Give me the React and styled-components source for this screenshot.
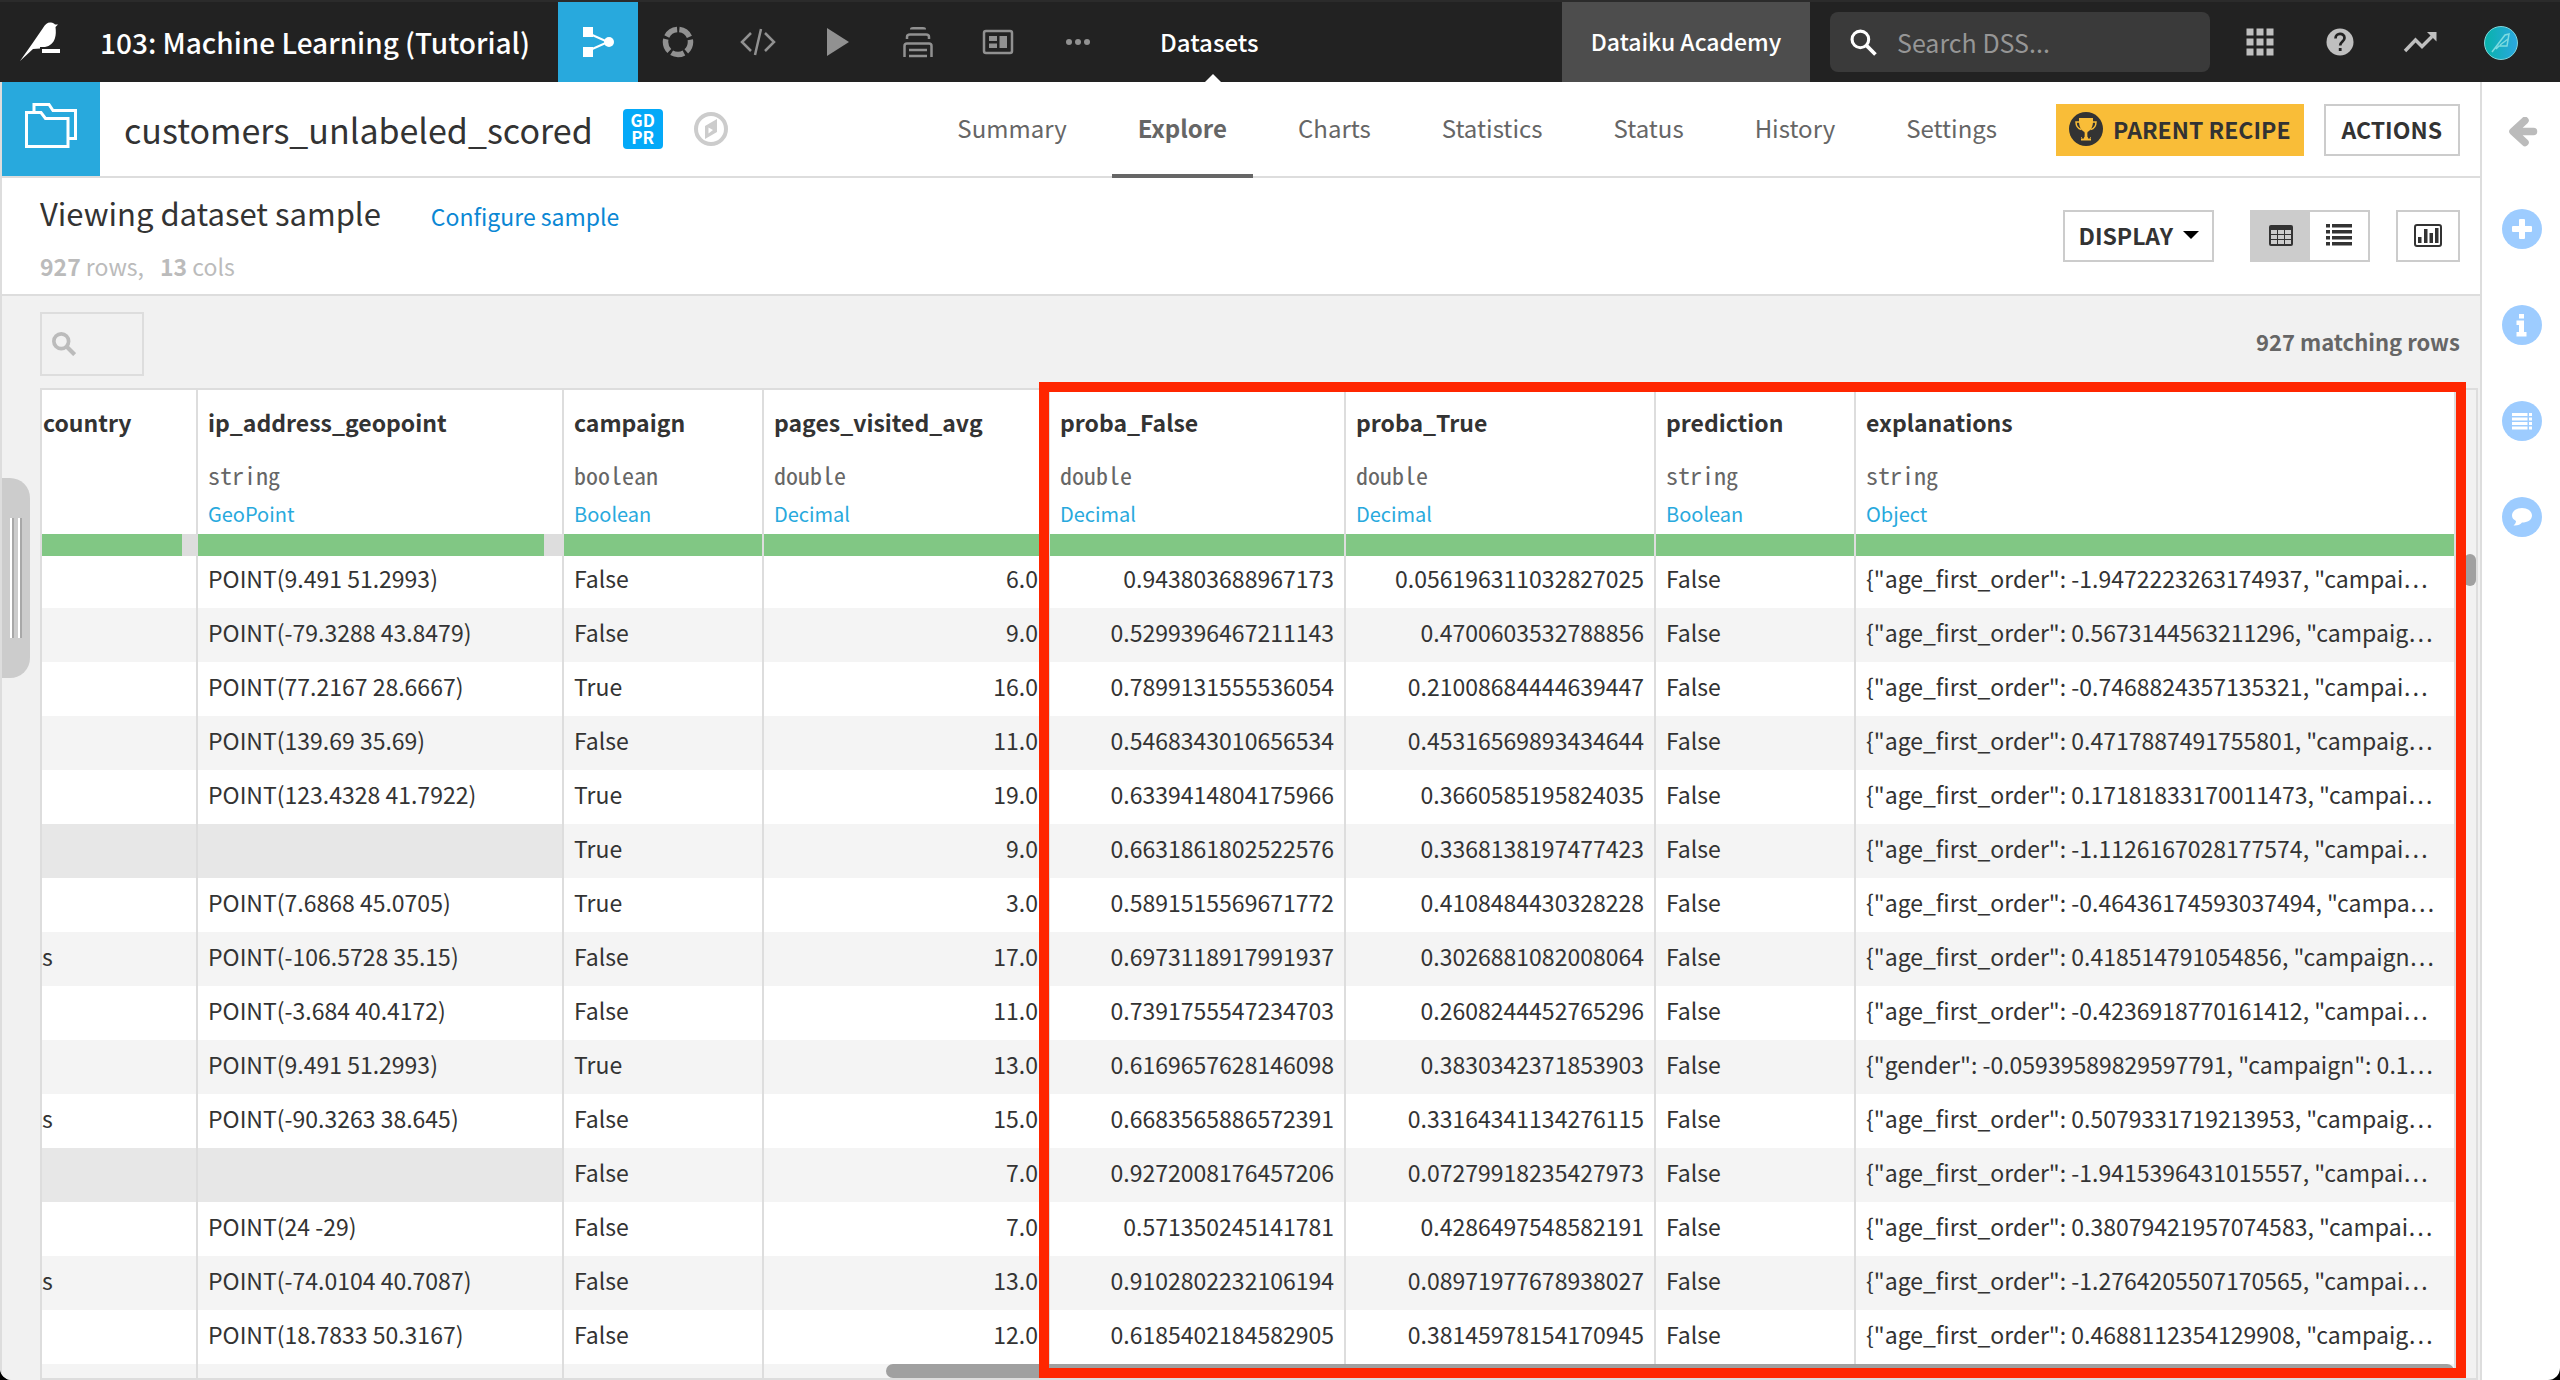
import React from 'react'
import styled, { createGlobalStyle } from 'styled-components'

const GlobalStyle = createGlobalStyle`
  * {
    box-sizing: border-box;
  }

  body {
    margin: 0;
    background: #000;
    color: #333;
    font-family: "Noto Sans CJK KR", "Noto Sans", sans-serif;
    font-size: 23px;
    line-height: 40px;
  }

  button, input {
    font: inherit;
    color: inherit;
    background: none;
    border: 0;
    padding: 0;
    margin: 0;
    border-radius: 0;
    outline: none;
  }

  button {
    cursor: pointer;
  }

  a {
    color: inherit;
    text-decoration: none;
  }

  svg {
    display: block;
    flex: none;
  }
`

const Window = styled.div`
  display: flex;
  flex-direction: column;
  height: 100vh;
  overflow: hidden;
  background: #fff;
  border-radius: 0 0 12px 12px;
`

// top bar

const TopBar = styled.header`
  display: flex;
  align-items: stretch;
  height: 82px;
  flex: none;
  padding-right: 42px;
  background: #222;
  border-top: 2px solid #2b2b2b;
  color: #fff;
`

const Project = styled.a`
  display: flex;
  align-items: center;
  width: 558px;
  padding-left: 20px;
  gap: 40px;
  font-size: 28px;
  font-weight: 500;
  white-space: nowrap;
`

const NavButton = styled.button`
  display: flex;
  align-items: center;
  justify-content: center;
  width: 80px;
  color: #919191;
  background: ${p => p.$active ? '#28a9dd' : 'transparent'};
`

const Section = styled.a`
  position: relative;
  display: flex;
  align-items: center;
  padding: 0 42px;
  font-size: 24px;
  font-weight: 500;

  &:after {
    content: '';
    position: absolute;
    bottom: 0;
    left: 50%;
    margin-left: -4px;
    border: 8px solid transparent;
    border-top: 0;
    border-bottom-color: #fff;
  }
`

const Instance = styled.a`
  display: flex;
  align-items: center;
  justify-content: center;
  width: 248px;
  margin-left: auto;
  padding-bottom: 2px;
  background: #4d4d4d;
  font-weight: 500;
`

const GlobalSearch = styled.label`
  display: flex;
  align-items: center;
  gap: 20px;
  width: 380px;
  height: 60px;
  margin: 10px 10px 0 20px;
  padding-left: 20px;
  border-radius: 8px;
  background: #3a3a3a;

  input {
    flex: 1;
    min-width: 0;
    font-size: 25px;
  }

  input::placeholder {
    color: #969696;
    opacity: 1;
  }
`

const TopIcon = styled.button`
  display: flex;
  align-items: center;
  justify-content: center;
  width: 80px;
  color: #bfbfbf;
`

const Avatar = styled.button`
  display: flex;
  align-items: center;
  justify-content: center;
  width: 34px;
  height: 34px;
  margin: 24px 0 0 24px;
  border-radius: 50%;
  border: 1px solid #7fd6dc;
  background: linear-gradient(90deg, #08b3ab, #2ba7e0);
  color: #7ddbe0;
`

// page

const Body = styled.div`
  display: flex;
  flex: 1;
  min-height: 0;
  border-left: 2px solid #ddd;
`

const Main = styled.main`
  display: flex;
  flex-direction: column;
  flex: 1;
  min-width: 0;
`

const TitleBar = styled.div`
  display: flex;
  align-items: center;
  height: 96px;
  flex: none;
  padding-right: 20px;
  border-bottom: 2px solid #ddd;
`

const TypeTile = styled.div`
  display: flex;
  justify-content: center;
  width: 98px;
  height: 94px;
  padding-top: 21px;
  background: #28a9dd;
`

const Title = styled.h1`
  margin: 0 30px 0 24px;
  padding-top: 2px;
  font-size: 34px;
  font-weight: 400;
  line-height: 48px;
`

const Badge = styled.span`
  width: 40px;
  height: 40px;
  margin-right: 30px;
  padding-top: 2px;
  border-radius: 4px;
  background: #04a9f8;
  color: #fff;
  font-size: 17px;
  font-weight: 700;
  line-height: 17px;
  text-align: center;
`

const Tabs = styled.nav`
  display: flex;
  align-self: stretch;
  gap: 19px;
  margin: 0 33px 0 auto;
`

const Tab = styled.a`
  height: 96px;
  padding: 26px 26px 0;
  color: #666;
  font-size: 24px;
  font-weight: ${p => p.$active ? 700 : 400};
  border-bottom: 4px solid ${p => p.$active ? '#666' : 'transparent'};
`

const Button = styled.button`
  display: flex;
  align-items: center;
  justify-content: center;
  gap: 10px;
  height: 52px;
  padding: 0 ${p => p.$pad || 16}px 2px;
  border: 2px solid ${p => p.$primary ? '#f9bd38' : '#ccc'};
  background: ${p => p.$primary ? '#f9bd38' : '#fff'};
  color: #333;
  font-weight: 700;
  white-space: nowrap;
`

const TitleActions = styled.div`
  display: flex;
  gap: 20px;
  padding-top: 2px;
`

const SampleBar = styled.section`
  display: flex;
  justify-content: space-between;
  align-items: flex-start;
  height: 118px;
  flex: none;
  padding: 10px 20px 0 38px;
  border-bottom: 2px solid #ddd;
`

const SampleTitle = styled.div`
  display: flex;
  align-items: baseline;
  gap: 50px;

  h2 {
    margin: 0;
    font-size: 31px;
    font-weight: 400;
    line-height: 50px;
  }

  a {
    color: #0a87d4;
  }
`

const Counts = styled.p`
  margin: 0;
  color: #bbb;
  line-height: 56px;

  span {
    margin-right: 16px;
  }
`

const SampleActions = styled.div`
  display: flex;
  padding-top: 22px;
`

const Toggle = styled.div`
  display: flex;
  width: 120px;
  height: 52px;
  margin: 0 26px 0 36px;
  border: 2px solid #ccc;
`

const ToggleButton = styled.button`
  display: flex;
  align-items: center;
  justify-content: center;
  flex: 1;
  padding-bottom: 2px;
  background: ${p => p.$active ? '#ccc' : '#fff'};
`

const Explorer = styled.section`
  position: relative;
  display: flex;
  flex-direction: column;
  flex: 1;
  min-height: 0;
  padding: 16px 2px 0 38px;
  background: #f1f1f1;
`

const FilterRow = styled.div`
  display: flex;
  justify-content: space-between;
  align-items: flex-start;
  height: 76px;
  flex: none;
  padding-right: 18px;
  color: #666;
  font-size: 22px;
  font-weight: 700;
  line-height: 58px;
`

const Filter = styled.label`
  display: flex;
  align-items: center;
  width: 104px;
  height: 64px;
  padding: 0 10px;
  gap: 8px;
  border: 2px solid #ddd;

  input {
    width: 40px;
  }
`

const Drawer = styled.button`
  position: absolute;
  left: 0;
  top: 182px;
  display: flex;
  align-items: center;
  justify-content: center;
  gap: 4px;
  width: 28px;
  height: 200px;
  border-radius: 0 20px 20px 0;
  background: #ccc;

  i {
    width: 4px;
    height: 120px;
    background: #fff;
    border-right: 2px solid #a8a8a8;
  }
`

// grid

const Grid = styled.div`
  position: relative;
  flex: 1;
  min-height: 0;
  border: 2px solid #ddd;
  padding-right: 20px;
`

const Clip = styled.div`
  height: 100%;
  overflow: hidden;
  border-right: 2px solid #ddd;
`

const Table = styled.table`
  width: 100%;
  table-layout: fixed;
  border-collapse: separate;
  border-spacing: 0;
  background: #fff;
`

const Head = styled.th`
  padding: 12px 0 0;
  border-left: ${p => p.$first ? 0 : '2px solid #ddd'};
  text-align: left;
  font-weight: 400;
  vertical-align: top;
  white-space: nowrap;

  div {
    height: 40px;
    padding-left: ${p => p.$first ? 1 : 10}px;
  }

  .name {
    margin-bottom: 10px;
    font-weight: 700;
  }

  .storage {
    height: 44px;
    line-height: 46px;
    color: #666;
    font-family: "Noto Sans Mono CJK KR", "Noto Sans Mono CJK SC", monospace;
    font-size: 24px;
  }

  .meaning {
    height: 38px;
    line-height: 36px;
    color: #28a9dd;
    font-size: 20px;
  }
`

const Quality = styled.span`
  display: block;
  height: 22px;
  background: #ddd;

  i {
    display: block;
    height: 100%;
    background: #81c784;
  }
`

const Row = styled.tr`
  background: ${p => p.$odd ? '#f4f4f4' : '#fff'};
`

const Cell = styled.td`
  height: ${p => p.$top ? 52 : 54}px;
  padding: 0 10px ${p => p.$top ? 8 : 6}px ${p => p.$first ? 0 : 10}px;
  border-left: ${p => p.$first ? 0 : '2px solid #ddd'};
  background: ${p => p.$empty ? '#e7e7e7' : 'transparent'};
  line-height: ${p => p.$top ? 44 : 48}px;
  text-align: ${p => p.$num ? 'right' : 'left'};
  white-space: nowrap;
  overflow: hidden;
`

const ScrollThumb = styled.div`
  position: absolute;
  background: #a0a0a0;
  border-radius: 8px;
  ${p => p.$vertical
    ? 'top: 164px; right: 0; width: 12px; height: 32px;'
    : 'bottom: 0; left: 844px; right: 22px; height: 14px;'}
`

const Highlight = styled.div`
  position: absolute;
  top: -8px;
  bottom: 0;
  left: 997px;
  right: 10px;
  border: 10px solid #ff2600;
  pointer-events: none;
`

const SideBar = styled.aside`
  display: flex;
  flex-direction: column;
  align-items: center;
  width: 80px;
  flex: none;
  padding: 31px 0 0 2px;
  gap: 56px;
  border-left: 2px solid #ddd;
`

const SideButton = styled.button`
  display: flex;
  align-items: center;
  justify-content: center;
  width: 40px;
  height: 40px;
  border-radius: 50%;
  color: #fff;
  background: ${p => p.$plain ? 'transparent' : '#9dccff'};
`

// icons

const Svg = ({ w, h, children, ...rest }) => (
  <svg width={w} height={h} viewBox={`0 0 ${w} ${h}`} fill='currentColor' aria-hidden='true' {...rest}>{children}</svg>
)

const BirdIcon = () => (
  <Svg w={40} h={40}>
    <path d='M0 39 L12 22 L23 6 C25 2 28 0 31 0.500 C33 0.500 34 1.500 35 2.500 L38 2.500 L35.500 5 C36 9 36 13 35 16 C33.500 21 30 24 25 25 L20 25 L20 26.500 L13 27 Z' />
    <path d='M22 27H40V31H22z' />
  </Svg>
)

const FlowIcon = () => (
  <Svg w={32} h={32} color='#fff'>
    <path d='M1 1H11V11H1zM1 21H11V31H1z' />
    <circle cx='27' cy='16' r='5' />
    <path d='M8 8L26 16L8 24' fill='none' stroke='currentColor' strokeWidth='2' />
  </Svg>
)

const RingIcon = () => (
  <Svg w={32} h={32}>
    <circle cx='16' cy='16' r='12.5' fill='none' stroke='currentColor' strokeWidth='5.5' strokeDasharray='12.9 2.808' strokeDashoffset='-1.4' transform='rotate(-90 16 16)' />
  </Svg>
)

const CodeIcon = () => (
  <Svg w={36} h={28}>
    <path d='M11 5L2 14L11 23M25 5L34 14L25 23M21 1L15 27' fill='none' stroke='currentColor' strokeWidth='2.500' />
  </Svg>
)

const PlayIcon = () => (
  <Svg w={24} h={30}>
    <path d='M1 1L23 15L1 29z' />
  </Svg>
)

const StackIcon = () => (
  <Svg w={32} h={32}>
    <path d='M8 3.500V3Q8 1 11 1H21Q24 1 24 3V3.500z' />
    <path d='M5 13V11Q5 8.500 8 8.500H24Q27 8.500 27 11V13M2.500 31V20Q2.500 17.500 5 17.500H27Q29.500 17.500 29.500 20V31M7 24H25M7 30H25' fill='none' stroke='currentColor' strokeWidth='2.500' />
  </Svg>
)

const PanelIcon = () => (
  <Svg w={32} h={26}>
    <rect x='2' y='2' width='28' height='22' rx='2' fill='none' stroke='currentColor' strokeWidth='2.500' />
    <path d='M7 7H15V12H7zM7 14.500H15V19H7zM17.500 7H25V19H17.500z' />
  </Svg>
)

const DotsIcon = () => (
  <Svg w={26} h={8}>
    <circle cx='4' cy='4' r='3' /><circle cx='13' cy='4' r='3' /><circle cx='22' cy='4' r='3' />
  </Svg>
)

const LensIcon = ({ size, stroke, color }) => (
  <svg width={size} height={size} viewBox='0 0 26 26' fill='none' stroke={color} strokeWidth={stroke} aria-hidden='true'>
    <circle cx='10' cy='10' r='8' />
    <path d='M16 16L24.500 24.500' strokeWidth={stroke + 0.5} />
  </svg>
)

const AppsIcon = () => (
  <Svg w={28} h={28}>
    {[0, 10, 20].map(y => [0, 10, 20].map(x => <rect key={`${x}.${y}`} x={x + 0.5} y={y + 0.5} width='7' height='7' />))}
  </Svg>
)

const HelpIcon = () => (
  <Svg w={28} h={28}>
    <circle cx='14' cy='14' r='13.500' />
    <path d='M9.500 10.500C9.500 4.500 18.500 4.500 18.500 10C18.500 13.500 14.200 13.500 14.200 17.500' fill='none' stroke='#222' strokeWidth='2.700' />
    <path d='M12.800 20H15.600V23H12.800z' fill='#222' />
  </Svg>
)

const TrendIcon = () => (
  <Svg w={34} h={22}>
    <path d='M2 20L12.500 9L19 15.500L29 5.500' fill='none' stroke='currentColor' strokeWidth='3.400' />
    <path d='M24 1H33.500V10.500z' />
  </Svg>
)

const FoldersIcon = () => (
  <Svg w={52} h={46} fill='none' stroke='#fff' strokeWidth='3'>
    <path d='M9 9V1.500H24L28 7.500H50.500V35.500H44' />
    <path d='M1.500 9.500H16L20.500 15.500H43V43.500H1.500z' />
  </Svg>
)

const CompassIcon = () => (
  <Svg w={36} h={36} color='#ccc'>
    <circle cx='18' cy='18' r='15' fill='none' stroke='currentColor' strokeWidth='4' />
    <path d='M24 8V21L12 28V15z' />
    <path d='M15.500 16.500L20 19L15.500 22.500z' fill='#fff' />
  </Svg>
)

const TrophyIcon = () => (
  <Svg w={34} h={34}>
    <circle cx='17' cy='17' r='17' />
    <g fill='#f9bd38'>
      <path d='M10 6H24V9C24 15 22 18 18.500 20V25H22V28.500H12V25H15.500V20C12 18 10 15 10 9z' />
      <path d='M11 10H7C7 14 8.500 16.500 12.500 17.500M23 10H27C27 14 25.500 16.500 21.500 17.500' fill='none' stroke='#f9bd38' strokeWidth='1.500' />
    </g>
    <path d='M15.500 20.500C14.500 23 14 24 12 26.500H15zM18.500 20.500C19.500 23 20 24 22 26.500H19z' />
  </Svg>
)

const CaretIcon = () => (
  <Svg w={16} h={8} color='#000'><path d='M0 0H16L8 8z' /></Svg>
)

const TableIcon = () => (
  <Svg w={24} h={21}>
    <rect width='24' height='21' rx='2' />
    <g fill='#ccc'>
      {[5, 10, 15].map(y => [2, 9, 16].map(x => <rect key={`${x}.${y}`} x={x} y={y} width='6' height='4' />))}
    </g>
  </Svg>
)

const ListIcon = () => (
  <Svg w={26} h={22}>
    {[0, 6, 12, 18].map(y => <path key={y} d={`M0 ${y}H4V${y + 3.5}H0zM6 ${y}H26V${y + 3.5}H6z`} />)}
  </Svg>
)

const ChartIcon = () => (
  <Svg w={28} h={23}>
    <rect x='1' y='1' width='26' height='21' rx='2' fill='none' stroke='currentColor' strokeWidth='2' />
    <path d='M4 13H7.500V19H4zM10 5H13.500V19H10zM15.500 9H19V19H15.500zM21 4H24.500V19H21z' />
  </Svg>
)

const BackIcon = () => (
  <Svg w={32} h={32} fill='none' stroke='#bbb' strokeWidth='7.500'>
    <path d='M19 3.500L7 14.500L19 25.500M8 14.500H27.500' strokeLinejoin='round' strokeLinecap='round' />
  </Svg>
)

const PlusIcon = () => (
  <Svg w={20} h={20}><path d='M8 0H12Q13 0 13 1V7H19Q20 7 20 8V12Q20 13 19 13H13V19Q13 20 12 20H8Q7 20 7 19V13H1Q0 13 0 12V8Q0 7 1 7H7V1Q7 0 8 0z' /></Svg>
)

const InfoIcon = () => (
  <Svg w={12} h={23}><path d='M3 0H8V4.500H3zM0.500 6.500H8V18H10.500V22.500H0.500V18H3V11H0.500z' /></Svg>
)

const RowsIcon = () => (
  <Svg w={20} h={17}>
    {[0, 4.5, 9, 13.5].map(y => <path key={y} d={`M0 ${y}H15.500V${y + 3}H0zM17 ${y}H20V${y + 3}H17z`} />)}
  </Svg>
)

const CommentIcon = () => (
  <Svg w={20} h={18}><path d='M10 0C15.500 0 20 3 20 7.500S15.500 14.500 10 14.500C8.500 16.500 5 18 1.500 17.500C3 16 4 15 4 13C1.500 11.500 0 10 0 7.500C0 3 4.500 0 10 0z' /></Svg>
)

// data

const navItems = [
  ['Flow', FlowIcon],
  ['Lab', RingIcon],
  ['Code', CodeIcon],
  ['Jobs', PlayIcon],
  ['Automation', StackIcon],
  ['Dashboards', PanelIcon],
  ['More', DotsIcon]
]

const tabs = ['Summary', 'Explore', 'Charts', 'Statistics', 'Status', 'History', 'Settings']

const sideItems = [
  ['Add', PlusIcon],
  ['Details', InfoIcon],
  ['Schema', RowsIcon],
  ['Discussions', CommentIcon]
]

const columns = [
  { name: 'country', storage: '', meaning: '', width: 154, valid: 91 },
  { name: 'ip_address_geopoint', storage: 'string', meaning: 'GeoPoint', width: 366, valid: 95 },
  { name: 'campaign', storage: 'boolean', meaning: 'Boolean', width: 200, valid: 100 },
  { name: 'pages_visited_avg', storage: 'double', meaning: 'Decimal', width: 286, valid: 100, num: true },
  { name: 'proba_False', storage: 'double', meaning: 'Decimal', width: 296, valid: 100, num: true },
  { name: 'proba_True', storage: 'double', meaning: 'Decimal', width: 310, valid: 100, num: true },
  { name: 'prediction', storage: 'string', meaning: 'Boolean', width: 200, valid: 100 },
  { name: 'explanations', storage: 'string', meaning: 'Object', valid: 100 }
]

const rows = [
  ['', 'POINT(9.491 51.2993)', 'False', '6.0', '0.943803688967173', '0.056196311032827025', 'False', '{"age_first_order": -1.9472223263174937, "campai…'],
  ['', 'POINT(-79.3288 43.8479)', 'False', '9.0', '0.5299396467211143', '0.4700603532788856', 'False', '{"age_first_order": 0.5673144563211296, "campaig…'],
  ['', 'POINT(77.2167 28.6667)', 'True', '16.0', '0.7899131555536054', '0.21008684444639447', 'False', '{"age_first_order": -0.7468824357135321, "campai…'],
  ['', 'POINT(139.69 35.69)', 'False', '11.0', '0.5468343010656534', '0.45316569893434644', 'False', '{"age_first_order": 0.4717887491755801, "campaig…'],
  ['', 'POINT(123.4328 41.7922)', 'True', '19.0', '0.6339414804175966', '0.3660585195824035', 'False', '{"age_first_order": 0.17181833170011473, "campai…'],
  [null, null, 'True', '9.0', '0.6631861802522576', '0.3368138197477423', 'False', '{"age_first_order": -1.1126167028177574, "campai…'],
  ['', 'POINT(7.6868 45.0705)', 'True', '3.0', '0.5891515569671772', '0.4108484430328228', 'False', '{"age_first_order": -0.46436174593037494, "campa…'],
  ['s', 'POINT(-106.5728 35.15)', 'False', '17.0', '0.6973118917991937', '0.3026881082008064', 'False', '{"age_first_order": 0.418514791054856, "campaign…'],
  ['', 'POINT(-3.684 40.4172)', 'False', '11.0', '0.7391755547234703', '0.2608244452765296', 'False', '{"age_first_order": -0.4236918770161412, "campai…'],
  ['', 'POINT(9.491 51.2993)', 'True', '13.0', '0.6169657628146098', '0.3830342371853903', 'False', '{"gender": -0.05939589829597791, "campaign": 0.1…'],
  ['s', 'POINT(-90.3263 38.645)', 'False', '15.0', '0.6683565886572391', '0.33164341134276115', 'False', '{"age_first_order": 0.5079331719213953, "campaig…'],
  [null, null, 'False', '7.0', '0.9272008176457206', '0.07279918235427973', 'False', '{"age_first_order": -1.9415396431015557, "campai…'],
  ['', 'POINT(24 -29)', 'False', '7.0', '0.571350245141781', '0.4286497548582191', 'False', '{"age_first_order": 0.38079421957074583, "campai…'],
  ['s', 'POINT(-74.0104 40.7087)', 'False', '13.0', '0.9102802232106194', '0.08971977678938027', 'False', '{"age_first_order": -1.2764205507170565, "campai…'],
  ['', 'POINT(18.7833 50.3167)', 'False', '12.0', '0.6185402184582905', '0.38145978154170945', 'False', '{"age_first_order": 0.4688112354129908, "campaig…'],
  ['', '', '', '', '', '', '', '']
]

const DataTable = () => (
  <Table>
    <colgroup>
      {columns.map(({ name, width }) => <col key={name} width={width} />)}
    </colgroup>
    <thead>
      <tr>
        {columns.map(({ name, storage, meaning, valid }, i) => (
          <Head key={name} scope='col' $first={i === 0}>
            <div className='name'>{name}</div>
            <div className='storage'>{storage}</div>
            <div className='meaning'>{meaning}</div>
            <Quality><i style={{ width: `${valid}%` }} /></Quality>
          </Head>
        ))}
      </tr>
    </thead>
    <tbody>
      {rows.map((row, r) => (
        <Row key={r} $odd={r % 2 === 1}>
          {row.map((value, i) => (
            <Cell key={i} $top={r === 0} $first={i === 0} $num={columns[i].num} $empty={value === null}>{value}</Cell>
          ))}
        </Row>
      ))}
    </tbody>
  </Table>
)

const App = () => (
  <Window>
    <GlobalStyle />
    <TopBar>
      <Project href='#project'><BirdIcon /> 103: Machine Learning (Tutorial)</Project>
      {navItems.map(([label, Icon], i) => (
        <NavButton key={label} aria-label={label} $active={i === 0}><Icon /></NavButton>
      ))}
      <Section href='#datasets'>Datasets</Section>
      <Instance href='#academy'>Dataiku Academy</Instance>
      <GlobalSearch>
        <LensIcon size={27} stroke={3} color='#fff' />
        <input type='text' placeholder='Search DSS...' aria-label='Search DSS' />
      </GlobalSearch>
      <TopIcon aria-label='Applications'><AppsIcon /></TopIcon>
      <TopIcon aria-label='Help'><HelpIcon /></TopIcon>
      <TopIcon aria-label='Activity'><TrendIcon /></TopIcon>
      <Avatar aria-label='Profile'>
        <Svg w={20} h={20} fill='none' stroke='currentColor' strokeWidth='1.500'>
          <path d='M1 19L14 2L18 1L16 13H8L5 16M17 6L9 12' />
        </Svg>
      </Avatar>
    </TopBar>
    <Body>
      <Main>
        <TitleBar>
          <TypeTile><FoldersIcon /></TypeTile>
          <Title>customers_unlabeled_scored</Title>
          <Badge>GD<br />PR</Badge>
          <CompassIcon />
          <Tabs>
            {tabs.map(tab => <Tab key={tab} href={`#${tab}`} $active={tab === 'Explore'}>{tab}</Tab>)}
          </Tabs>
          <TitleActions>
            <Button $primary $pad={11}><TrophyIcon /> PARENT RECIPE</Button>
            <Button>ACTIONS</Button>
          </TitleActions>
        </TitleBar>
        <SampleBar>
          <div>
            <SampleTitle>
              <h2>Viewing dataset sample</h2>
              <a href='#sample'>Configure sample</a>
            </SampleTitle>
            <Counts><span><b>927</b> rows,</span><b>13</b> cols</Counts>
          </div>
          <SampleActions>
            <Button $pad={13}>DISPLAY <CaretIcon /></Button>
            <Toggle>
              <ToggleButton $active aria-label='Table view'><TableIcon /></ToggleButton>
              <ToggleButton aria-label='List view'><ListIcon /></ToggleButton>
            </Toggle>
            <Button aria-label='Column statistics'><ChartIcon /></Button>
          </SampleActions>
        </SampleBar>
        <Explorer>
          <FilterRow>
            <Filter>
              <LensIcon size={24} stroke={4} color='#bbb' />
              <input type='text' aria-label='Filter columns' />
            </Filter>
            <span>927 matching rows</span>
          </FilterRow>
          <Grid>
            <Clip><DataTable /></Clip>
            <ScrollThumb $vertical />
            <ScrollThumb />
            <Highlight />
          </Grid>
          <Drawer aria-label='Open panel'><i /><i /></Drawer>
        </Explorer>
      </Main>
      <SideBar>
        <SideButton $plain aria-label='Collapse'><BackIcon /></SideButton>
        {sideItems.map(([label, Icon]) => (
          <SideButton key={label} aria-label={label}><Icon /></SideButton>
        ))}
      </SideBar>
    </Body>
  </Window>
)

export default App
